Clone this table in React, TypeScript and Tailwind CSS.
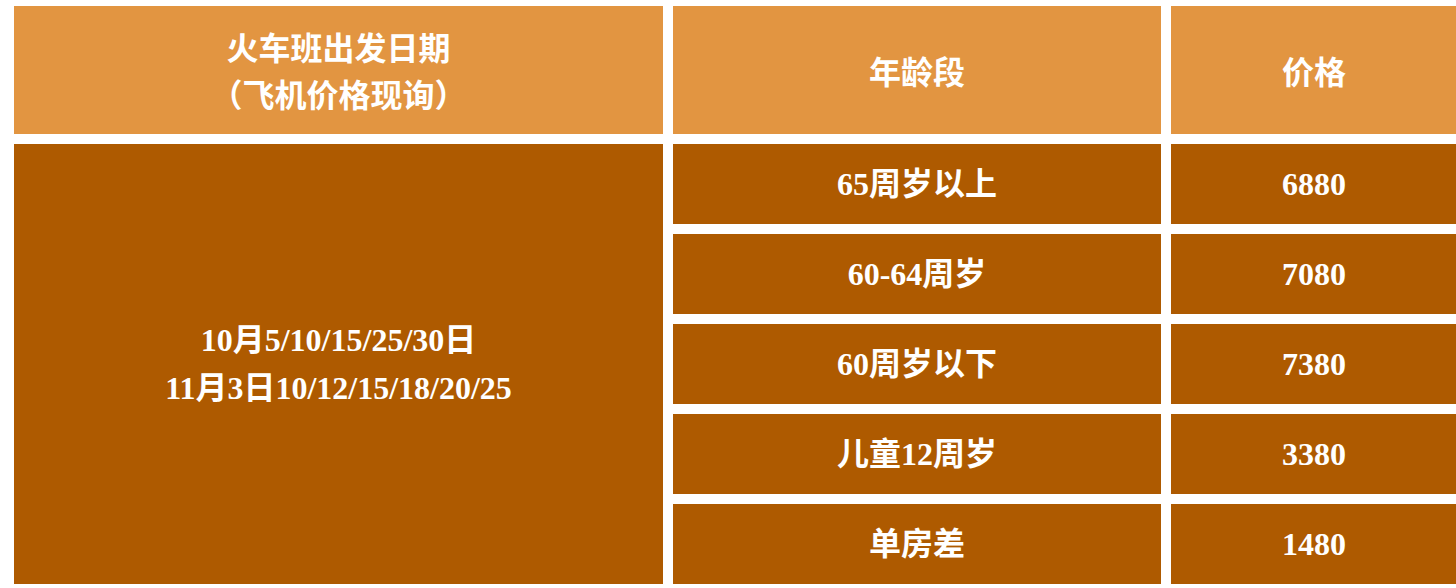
import { Fragment } from 'react';

const rows = [
	{ age: '65周岁以上', price: '6880' },
	{ age: '60-64周岁', price: '7080' },
	{ age: '60周岁以下', price: '7380' },
	{ age: '儿童12周岁', price: '3380' },
	{ age: '单房差', price: '1480' },
];

const serif = { fontFamily: '"Liberation Serif", "Noto Sans CJK SC", serif' };

const App: React.FC = () => {
	return (
		<div className="w-[1456px] h-[588px] overflow-hidden bg-white">
			<div className="pl-[14px] pt-[6px]">
				<div className="grid grid-cols-[649px_488px_286px] gap-[10px] text-white font-bold text-[32px]">
					<div className="h-[128px] bg-[#e29541] flex flex-col items-center justify-center leading-[47px] font-['Noto_Sans_CJK_SC',sans-serif]">
						<div>火车班出发日期</div>
						<div>（飞机价格现询）</div>
					</div>
					<div className="h-[128px] bg-[#e29541] flex items-center justify-center font-['Noto_Sans_CJK_SC',sans-serif]">
						年龄段
					</div>
					<div className="h-[128px] bg-[#e29541] flex items-center justify-center font-['Noto_Sans_CJK_SC',sans-serif]">
						价格
					</div>

					<div
						className="row-span-5 bg-[#ae5a00] flex flex-col items-center justify-center leading-[48px]"
						style={serif}
					>
						<div>10月5/10/15/25/30日</div>
						<div>11月3日10/12/15/18/20/25</div>
					</div>
					{rows.map((r) => (
						<Fragment key={r.age}>
							<div className="h-[80px] bg-[#ae5a00] flex items-center justify-center" style={serif}>
								{r.age}
							</div>
							<div className="h-[80px] bg-[#ae5a00] flex items-center justify-center" style={serif}>
								{r.price}
							</div>
						</Fragment>
					))}
				</div>
			</div>
		</div>
	);
};

export default App;
